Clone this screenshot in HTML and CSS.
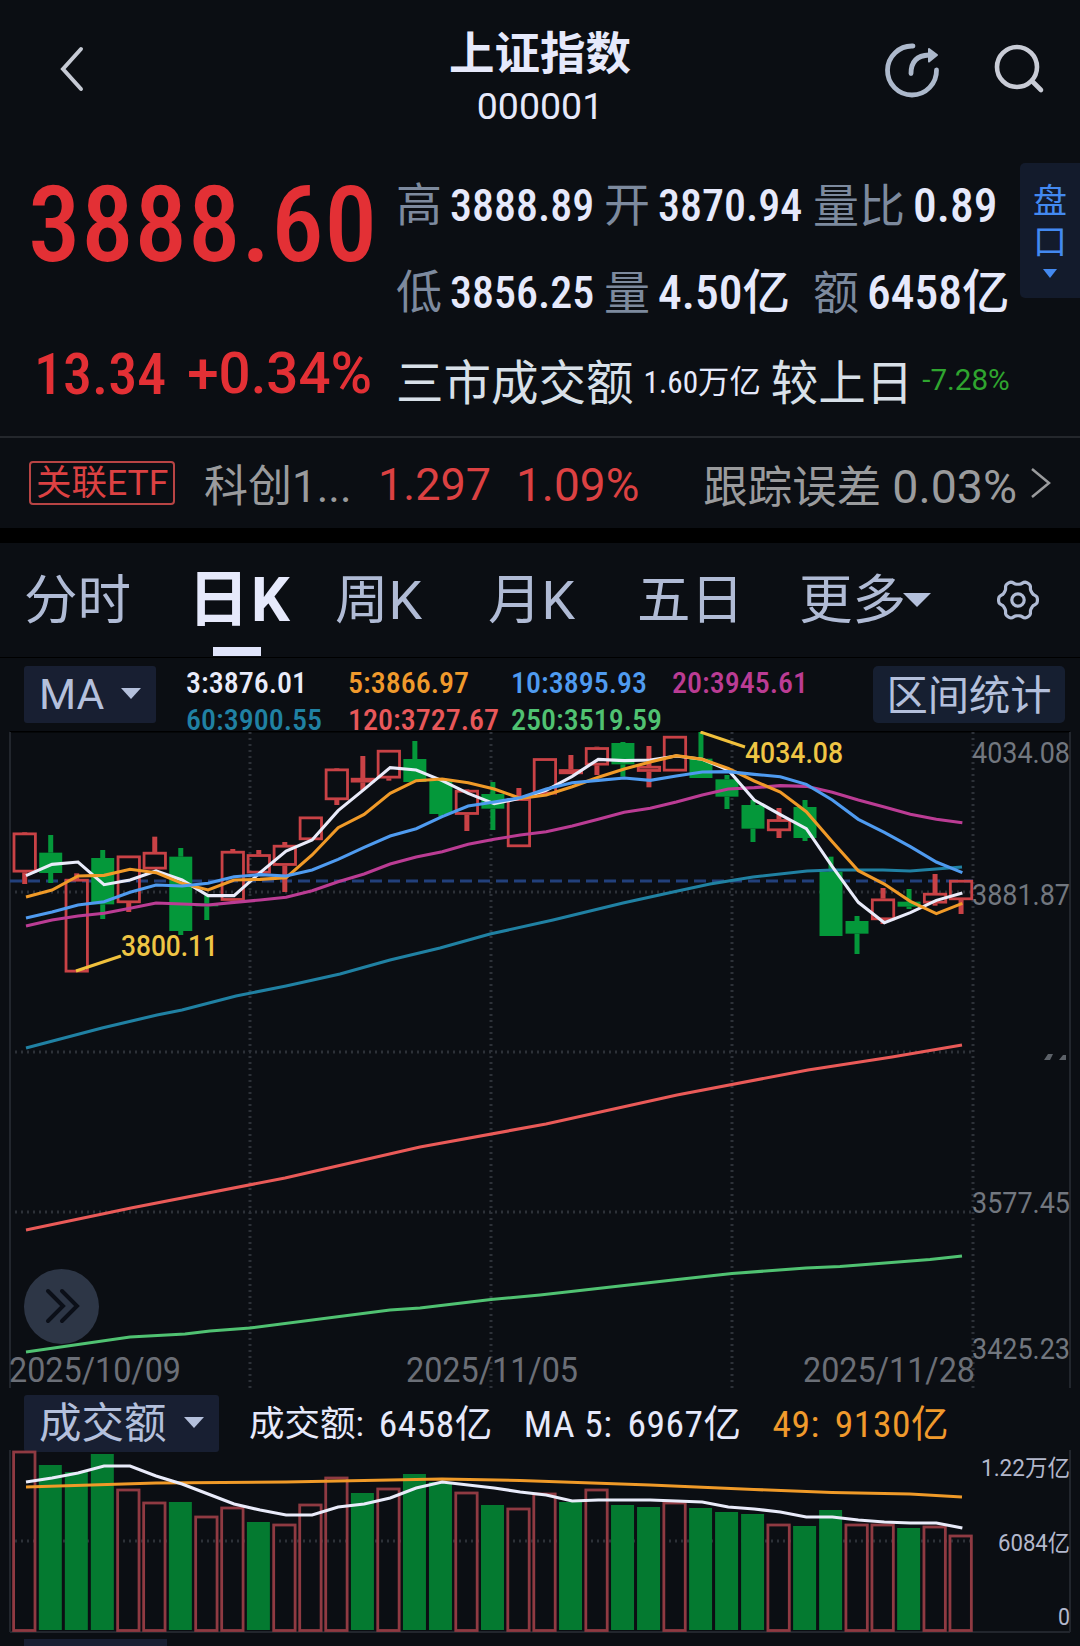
FILE: index.html
```
<!DOCTYPE html>
<html lang="zh-CN">
  <head>
    <meta charset="UTF-8" />
    <title>上证指数 000001</title>
    <link rel="stylesheet" href="styles.css">
  </head>
  <body>
    <header class="header">
      <svg class="icon-back" viewBox="0 0 28 48"><path d="M24 4 L6 24 L24 44" /></svg>
      <div class="title">
        <h1>上证指数</h1>
        <p>000001</p>
      </div>
      <div class="actions">
        <svg class="icon-share" viewBox="0 0 60 60">
          <path class="ring" d="M30 6 A24.5 24.5 0 1 0 53.5 30" />
          <path class="ring" d="M28 33.5 C28 22 34 15.5 46 15" />
          <path class="tip" d="M46 9 L54 15 L46 21.5 Z" />
        </svg>
        <svg class="icon-search" viewBox="0 0 54 54">
          <circle cx="24" cy="24" r="20" />
          <path d="M39 38 L48 47" />
        </svg>
      </div>
    </header>

    <section class="quote">
      <div class="price">
        <div class="last num">3888.60</div>
        <div class="change"><span class="num">13.34</span><span class="pct">+0.34%</span></div>
      </div>
      <div class="stats">
        <div class="row">
          <div class="cell"><label>高</label><b class="num">3888.89</b></div>
          <div class="cell"><label>开</label><b class="num">3870.94</b></div>
          <div class="cell"><label>量比</label><b class="num big">0.89</b></div>
        </div>
        <div class="row">
          <div class="cell"><label>低</label><b class="num">3856.25</b></div>
          <div class="cell"><label>量</label><b class="num big">4.50亿</b></div>
          <div class="cell"><label>额</label><b class="num big">6458亿</b></div>
        </div>
        <div class="row turnover">
          <span class="name">三市成交额</span>
          <span class="amount num">1.60万亿</span>
          <span class="name">较上日</span>
          <span class="down">-7.28%</span>
        </div>
      </div>
      <div class="pankou">
        <span>盘</span>
        <span>口</span>
        <i class="caret"></i>
      </div>
    </section>

    <section class="etf">
      <span class="badge">关联ETF</span>
      <span class="etf-name">科创1...</span>
      <span class="up etf-price">1.297</span>
      <span class="up">1.09%</span>
      <span class="track">跟踪误差 <span class="pct">0.03%</span></span>
      <svg class="icon-more" viewBox="0 0 22 32"><path d="M2 2 L19 16 L2 30" /></svg>
    </section>

    <nav class="tabs">
      <a class="tab">分时</a>
      <a class="tab active">日K</a>
      <a class="tab week">周K</a>
      <a class="tab month">月K</a>
      <a class="tab five">五日</a>
      <a class="tab more">更多<i class="caret"></i></a>
      <svg class="icon-gear" viewBox="-24 -24 48 48">
        <path id="gear" />
        <circle r="6.2" />
      </svg>
    </nav>

    <section class="ma-bar">
      <div class="select">MA<i class="caret"></i></div>
      <div class="legend num">
        <span class="ma3">3:3876.01</span>
        <span class="ma5">5:3866.97</span>
        <span class="ma10">10:3895.93</span>
        <span class="ma20">20:3945.61</span>
        <span class="ma60">60:3900.55</span>
        <span class="ma120">120:3727.67</span>
        <span class="ma250">250:3519.59</span>
      </div>
      <div class="range-btn">区间统计</div>
    </section>

    <section class="kline">
      <svg id="kline" width="1080" height="664" viewBox="0 11 1080 664"></svg>
      <div class="expand">
        <svg viewBox="0 0 36 36"><path d="M3 3 L18 18 L3 33 M17 3 L32 18 L17 33" /></svg>
      </div>
    </section>

    <section class="vol-bar">
      <div class="select">成交额<i class="caret"></i></div>
      <div class="vol-legend num">
        <span class="name">成交额:</span><span>6458亿</span>
        <span>MA 5:</span><span>6967亿</span>
        <span class="ma5">49:</span><span class="ma5">9130亿</span>
      </div>
    </section>
    <section class="volume">
      <svg id="volume" width="1080" height="187" viewBox="0 1452 1080 187"></svg>
    </section>
    <div class="next-select"></div>

    <script src="chart.js"></script>
  </body>
</html>
```
FILE: chart.js
```
const NS = "http://www.w3.org/2000/svg";
const STEP = 26.01;

function add(svg, tag, attrs, text) {
  const el = document.createElementNS(NS, tag);
  for (const key in attrs) el.setAttribute(key, attrs[key]);
  if (text) el.textContent = text;
  svg.appendChild(el);
  return el;
}

function line(svg, cls, x1, y1, x2, y2) {
  add(svg, "line", { class: cls, x1, y1, x2, y2 });
}

function label(svg, cls, text, x, y, width) {
  add(svg, "text", { class: cls, x, y, textLength: width, lengthAdjust: "spacingAndGlyphs" }, text);
}

// average with one value per candle
function average(svg, cls, values, toY) {
  const points = values.map((v, i) => `${26 + i * STEP},${toY(v)}`).join(" ");
  add(svg, "polyline", { class: cls, points });
}

// [up, high, top, bottom, low] in 3x device pixels
const candles = [
  [1, 336, 338, 457, 492], [0, 345, 398, 459, 489], [1, 460, 477, 757, 757],
  [0, 390, 414, 553, 597], [1, 407, 407, 549, 576], [1, 350, 396, 448, 448],
  [0, 384, 410, 633, 645], [0, 525, 551, 559, 600], [1, 387, 393, 542, 545],
  [1, 390, 403, 460, 460], [1, 366, 375, 437, 516], [1, 290, 290, 360, 360],
  [1, 144, 146, 240, 255], [1, 108, 174, 187, 210], [1, 90, 90, 175, 182],
  [0, 63, 117, 186, 186], [0, 178, 182, 282, 290], [1, 208, 210, 284, 333],
  [0, 186, 222, 266, 330], [1, 204, 235, 381, 381], [1, 115, 115, 223, 223],
  [1, 105, 148, 162, 162], [1, 80, 82, 136, 165], [0, 66, 69, 133, 170],
  [1, 78, 138, 155, 202], [1, 48, 48, 154, 154], [0, 36, 116, 174, 174],
  [0, 165, 178, 230, 267], [0, 240, 255, 326, 366], [1, 264, 298, 333, 354],
  [0, 240, 261, 354, 363], [0, 410, 455, 648, 648], [0, 588, 603, 641, 702],
  [1, 504, 536, 600, 612], [0, 507, 545, 560, 567], [1, 462, 519, 550, 557],
  [1, 480, 480, 540, 582]
];

const averages = {
  ma3: [467, 433, 426, 494, 480, 453, 480, 527, 527, 458, 393, 360, 272, 208, 143, 150, 182, 220, 251, 235, 211, 169, 118, 122, 120, 108, 118, 150, 240, 284, 326, 440, 547, 608, 578, 541, 519],
  ma5: [531, 510, 468, 466, 448, 458, 490, 510, 480, 478, 473, 405, 323, 283, 220, 182, 177, 188, 207, 235, 225, 200, 172, 147, 126, 107, 118, 145, 183, 216, 275, 365, 452, 492, 544, 581, 550],
  ma10: [594, 576, 555, 545, 517, 495, 498, 490, 470, 464, 468, 450, 418, 382, 348, 326, 290, 258, 246, 233, 207, 188, 181, 174, 181, 168, 156, 155, 163, 170, 193, 240, 298, 337, 380, 426, 458],
  ma20: [618, 600, 588, 580, 565, 549, 552, 555, 547, 540, 532, 512, 485, 462, 432, 411, 395, 373, 358, 345, 335, 318, 298, 277, 265, 246, 225, 207, 203, 197, 199, 217, 240, 261, 283, 298, 308]
};

const longAverages = {
  ma60: "26,328 102,308 157,295 182,290 236,276 286,266 340,254 390,240 440,228 490,214 553,200 623,183 673,172 710,164 753,157 807,151 833,150 883,150 910,151 962,147",
  ma120: "26,510 131,488 285,458 420,427 546,404 677,375 808,350 892,337 962,325",
  ma250: "26,632 130,617 185,614 210,611 250,608 390,590 420,588 491,579.5 540,575 673,560 732,553.5 806,548 840,546.5 930,539.5 962,536"
};

function drawKline() {
  const svg = document.getElementById("kline");
  line(svg, "frame top", 10, 11.5, 1070, 11.5);
  line(svg, "frame", 10, 12, 10, 668);
  line(svg, "frame", 1070, 12, 1070, 668);
  [250, 491, 732, 973].forEach(x => line(svg, "grid", x, 12, x, 668));
  [172, 332, 492].forEach(y => line(svg, "grid", 15, y, 973, y));
  line(svg, "last-price", 10, 161, 973, 161);

  candles.forEach(([up, high, top, bottom, low], i) => {
    const x = 24.7 + i * STEP;
    const cls = up ? "up" : "down";
    const w = 5;
    if (high < top) add(svg, "rect", { class: cls + "-fill", x: x - w / 2, y: high / 3, width: w, height: (top - high) / 3 });
    if (low > bottom) add(svg, "rect", { class: cls + "-fill", x: x - w / 2, y: bottom / 3, width: w, height: (low - bottom) / 3 });
    if (up) {
      add(svg, "rect", { class: "up-box", x: x - 10.7, y: top / 3 + 1.2, width: 21.4, height: (bottom - top) / 3 - 2.4 });
    } else {
      add(svg, "rect", { class: "down-fill", x: x - 11.5, y: top / 3, width: 23, height: (bottom - top) / 3 });
    }
  });

  for (const name in longAverages) {
    add(svg, "polyline", { class: "avg " + name, points: longAverages[name] });
  }
  ["ma20", "ma3", "ma5", "ma10"].forEach(name => average(svg, "avg " + name, averages[name], v => v / 3));

  line(svg, "pointer", 700.5, 12, 745, 27);
  label(svg, "mark", "4034.08", 745, 43, 98);
  line(svg, "pointer", 76, 251, 121, 236);
  label(svg, "mark", "3800.11", 121, 236, 97);

  label(svg, "axis", "4034.08", 972, 43, 98);
  label(svg, "axis", "3881.87", 972, 184.5, 98);
  label(svg, "axis", "3577.45", 972, 493, 98);
  label(svg, "axis", "3425.23", 972, 639, 98);
  add(svg, "path", { class: "speck", d: "M1044 340 l4 -6 h5 l-3 6 Z M1059 340 l4 -5 h3 v5 Z" });

  label(svg, "date", "2025/10/09", 9, 662, 172);
  label(svg, "date", "2025/11/05", 406, 662, 172);
  label(svg, "date", "2025/11/28", 803, 662, 172);
}

// [up, top of the bar]
const volumes = [
  [1, 1451], [0, 1465], [0, 1472], [0, 1454], [1, 1489], [1, 1502], [0, 1502], [1, 1516],
  [1, 1507], [0, 1522], [1, 1524], [1, 1504], [1, 1477], [0, 1493], [1, 1488], [0, 1474],
  [0, 1482], [1, 1492], [0, 1505], [1, 1508], [1, 1493], [0, 1502], [1, 1489], [0, 1505],
  [0, 1507], [1, 1502], [0, 1508], [0, 1512], [0, 1514], [1, 1524], [0, 1526], [0, 1510],
  [1, 1524], [1, 1524], [0, 1528], [1, 1526], [1, 1535]
];
const volumeMa5 = [1482, 1478, 1473, 1466, 1466, 1476, 1484, 1494, 1504, 1510, 1515, 1515, 1507, 1504, 1498, 1488, 1482, 1485, 1488, 1492, 1495, 1501, 1500, 1500, 1500, 1501, 1502, 1507, 1509, 1512, 1517, 1517, 1520, 1522, 1523, 1523, 1528];

function drawVolume() {
  const svg = document.getElementById("volume");
  line(svg, "frame", 10, 1450, 10, 1632);
  line(svg, "frame", 1070, 1450, 1070, 1632);
  line(svg, "frame bottom", 10, 1632, 1070, 1632);
  line(svg, "grid", 15, 1541, 973, 1541);

  volumes.forEach(([up, top], i) => {
    const x = 24.3 + i * STEP;
    if (up) {
      add(svg, "rect", { class: "vol-up", x: x - 10.7, y: top + 1, width: 21.4, height: 1629.5 - top });
    } else {
      add(svg, "rect", { class: "vol-down", x: x - 11.5, y: top, width: 23, height: 1630 - top });
    }
  });

  add(svg, "polyline", { class: "avg ma5", points: "26,1487 156,1483 286,1482 390,1480 442,1479 520,1480.5 650,1485 754,1489.5 832,1492.5 910,1494 962,1497" });
  average(svg, "avg ma3", volumeMa5, v => v);

  label(svg, "vol-axis", "1.22万亿", 981, 1476, 89);
  label(svg, "vol-axis", "6084亿", 998, 1551, 72);
  label(svg, "vol-axis", "0", 1058, 1625, 12);
}

// six-toothed cog outline
function drawGear() {
  const points = [];
  for (let a = 0; a <= 360; a += 4) {
    const t = (a * Math.PI) / 180;
    const r = 17.6 + 2 * Math.tanh(1.6 * Math.cos(6 * t));
    points.push(`${(r * Math.cos(t)).toFixed(2)} ${(r * Math.sin(t)).toFixed(2)}`);
  }
  document.getElementById("gear").setAttribute("d", "M" + points.join("L") + "Z");
}

drawKline();
drawVolume();
drawGear();
```
FILE: styles.css
```
* {
  box-sizing: border-box;
}
body {
  margin: 0;
  width: 1080px;
  height: 1646px;
  overflow: hidden;
  background: #0b0e13;
  color: #e6e9fb;
  font-family: Roboto, "Noto Sans CJK SC", sans-serif;
}
h1, p {
  margin: 0;
}
svg {
  display: block;
  fill: none;
}
label, b, i {
  font-weight: inherit;
  font-style: normal;
}
.num {
  font-stretch: 87.5%;
}
.caret {
  display: inline-block;
  border: solid transparent;
  border-width: 11px 10.5px 0;
  border-top-color: #b4c0dc;
}

/* header */
.header {
  display: grid;
  grid-template-columns: 1fr 200px 1fr;
  height: 150px;
}
.icon-back {
  width: 28px;
  height: 48px;
  margin: 45px 0 0 57px;
  stroke: #c6cad4;
  stroke-width: 4;
  stroke-linecap: round;
}
.title {
  text-align: center;
}
.title h1 {
  margin-top: 24px;
  font-size: 45.5px;
  line-height: 62px;
  font-weight: 700;
}
.title p {
  font-size: 37.5px;
  line-height: 40px;
}
.actions {
  display: flex;
  justify-content: flex-end;
  gap: 50px;
  padding: 40px 33px 0 0;
}
.icon-share {
  width: 60px;
  height: 60px;
}
.icon-share .ring {
  stroke: #adb9cc;
  stroke-width: 4.8;
  stroke-linecap: round;
}
.icon-share .tip {
  fill: #adb9cc;
  stroke: #adb9cc;
  stroke-width: 2;
  stroke-linejoin: round;
}
.icon-search {
  width: 54px;
  height: 54px;
  margin-top: 3px;
  stroke: #c9ccd6;
  stroke-width: 4.6;
  stroke-linecap: round;
}

/* quote */
.quote {
  display: flex;
  height: 288px;
  border-bottom: 2px solid #24272c;
}
.price {
  width: 396px;
  padding-left: 28px;
  color: #e33035;
}
.last {
  margin-top: 14px;
  font-size: 105px;
  line-height: 124px;
  font-weight: 500;
  letter-spacing: 0.8px;
}
.change {
  display: flex;
  gap: 21px;
  margin-top: 51px;
  padding-left: 6px;
  font-size: 58px;
  line-height: 70px;
  font-weight: 500;
}
.change .pct {
  font-size: 56.5px;
}
.stats {
  width: 624px;
  padding-top: 12px;
}
.row {
  display: grid;
  grid-template-columns: 208px 209px 1fr;
  height: 87px;
  align-items: center;
  white-space: nowrap;
}
.cell {
  display: flex;
  align-items: baseline;
  gap: 8px;
  line-height: 87px;
}
.cell label {
  font-size: 46px;
  color: #7d8a9e;
}
.cell b {
  font-size: 44px;
  font-weight: 500;
}
.cell .big {
  font-size: 47.5px;
}
.turnover {
  display: flex;
  gap: 10px;
}
.turnover .name {
  font-size: 47.5px;
  color: #d8e0e8;
}
.turnover .amount {
  font-size: 31.3px;
}
.turnover .down {
  margin-left: -1px;
  font-size: 29.6px;
  color: #2fa52f;
}
.pankou {
  display: flex;
  flex-direction: column;
  align-items: center;
  width: 60px;
  height: 135px;
  margin-top: 13px;
  padding-top: 18px;
  border-radius: 5px 0 0 5px;
  background: #131b2c;
  color: #4389f0;
  font-size: 34px;
  line-height: 41px;
}
.pankou .caret {
  margin-top: 6px;
  border-width: 9px 7px 0;
  border-top-color: #4389f0;
}

/* related etf */
.etf {
  display: flex;
  align-items: center;
  height: 90px;
  padding-left: 29px;
  font-size: 46px;
  white-space: nowrap;
}
.badge {
  width: 146px;
  height: 44px;
  padding-left: 5px;
  border: 2px solid #b84444;
  border-radius: 4px;
  color: #dc4142;
  font-size: 35.5px;
  line-height: 41px;
}
.etf-name {
  width: 174px;
  margin-left: 29px;
  font-size: 44px;
  color: #9a9b9d;
}
.up {
  padding-top: 3px;
  color: #dc4142;
}
.etf-price {
  width: 138px;
  font-size: 45px;
}
.track {
  margin-left: auto;
  font-size: 44.5px;
  color: #9a9b9d;
}
.track .pct {
  font-size: 46.5px;
}
.icon-more {
  width: 22px;
  height: 32px;
  margin: 0 28px 0 13px;
  stroke: #9a9b9d;
  stroke-width: 2.5;
}

/* period tabs */
.tabs {
  display: flex;
  align-items: center;
  height: 130px;
  border-top: 15px solid #000;
  border-bottom: 1px solid #000;
  color: #b0bbd5;
  font-size: 53.5px;
}
.tab {
  position: relative;
  flex: none;
  width: 170px;
  height: 114px;
  padding-left: 24px;
  line-height: 115px;
  white-space: nowrap;
}
.tab.active {
  width: 141px;
  padding-left: 18px;
  color: #e6e9fb;
  font-size: 61px;
  font-weight: 700;
  letter-spacing: 2px;
}
.tab.active::after {
  content: "";
  position: absolute;
  left: 43px;
  bottom: 1px;
  width: 48px;
  height: 9px;
  background: #e0e4fa;
}
.tab.week {
  width: 153px;
}
.tab.month {
  width: 149px;
}
.tab.five {
  width: 162px;
}
.tab.more {
  width: 219px;
}
.tab .caret {
  margin-left: -3px;
  border-width: 14px 14px 0;
  vertical-align: 12px;
}
.icon-gear {
  width: 48px;
  height: 48px;
  stroke: #b0bbd5;
  stroke-width: 3.2;
}

/* moving averages */
.ma-bar {
  display: flex;
  height: 73px;
  padding: 8px 15px 0 24px;
}
.select {
  display: flex;
  align-items: center;
  justify-content: space-between;
  height: 57px;
  padding: 0 15px;
  border-radius: 3px;
  background: #181f32;
  color: #b4c0dc;
  font-size: 42.5px;
  line-height: 61px;
}
.select .caret {
  margin-top: -3px;
}
.ma-bar .select {
  width: 132px;
}
.legend {
  display: grid;
  grid-template-columns: 162px 163px 161px 1fr;
  width: 680px;
  margin-top: -2px;
  padding-left: 30px;
  font-size: 30px;
  line-height: 37px;
  font-weight: 500;
  white-space: nowrap;
}
.range-btn {
  width: 192px;
  height: 57px;
  margin-left: auto;
  border-radius: 5px;
  background: #161f31;
  color: #b4c0dc;
  font-size: 41.3px;
  line-height: 60px;
  text-align: center;
}
.ma3 { color: #e9ebfa; stroke: #e9ebfa; }
.ma5 { color: #f09a2c; stroke: #f09a28; }
.ma10 { color: #4f9bf0; stroke: #4f9bf0; }
.ma20 { color: #bb3c94; stroke: #bb3c94; }
.ma60 { color: #2081a3; stroke: #2081a3; }
.ma120 { color: #e8585a; stroke: #ea5a58; }
.ma250 { color: #50c272; stroke: #50c272; }
span {
  stroke: none;
}

/* charts */
.kline {
  position: relative;
  height: 664px;
}
.frame {
  stroke: #22262d;
  stroke-width: 2;
}
.frame.top {
  stroke: #000;
}
.grid {
  stroke: #2d3138;
  stroke-width: 3;
  stroke-dasharray: 2 4;
}
.last-price {
  stroke: #22407c;
  stroke-width: 3;
  stroke-dasharray: 12 6;
}
.up-fill {
  fill: #c94246;
}
.up-box {
  stroke: #c94246;
  stroke-width: 2.8;
}
.down-fill {
  fill: #04983a;
}
.avg {
  stroke-width: 3.1;
}
.pointer {
  stroke: #f0c03c;
  stroke-width: 3;
}
.mark {
  fill: #efc544;
  font-size: 29.5px;
  font-weight: 500;
}
.axis {
  fill: #72777f;
  font-size: 29px;
}
.speck {
  fill: #5c6168;
}
.date {
  fill: #6b6f77;
  font-size: 35px;
}
.expand {
  position: absolute;
  left: 24px;
  top: 538px;
  width: 75px;
  height: 75px;
  padding: 19px 0 0 21px;
  border-radius: 50%;
  background: rgba(58, 68, 88, 0.75);
}
.expand svg {
  width: 36px;
  height: 36px;
  stroke: #0b0f18;
  stroke-width: 4;
  stroke-linecap: round;
}
.vol-bar {
  display: flex;
  height: 57px;
  padding-left: 24px;
}
.vol-bar .select {
  width: 195px;
}
.vol-legend {
  display: flex;
  gap: 15px;
  padding-left: 30px;
  font-size: 37.5px;
  letter-spacing: 0.5px;
  line-height: 59px;
  white-space: nowrap;
}
.vol-legend .name {
  font-size: 35.5px;
  letter-spacing: 0;
}
.vol-legend span:nth-child(even) {
  margin-right: 16px;
}
.volume svg {
  overflow: visible;
}
.vol-up {
  stroke: #8f3a42;
  stroke-width: 2.8;
}
.vol-down {
  fill: #047a30;
}
.vol-axis {
  fill: #b3b8cc;
  font-size: 23px;
}
.next-select {
  width: 143px;
  height: 7px;
  margin-left: 24px;
  background: #181f32;
}
```
